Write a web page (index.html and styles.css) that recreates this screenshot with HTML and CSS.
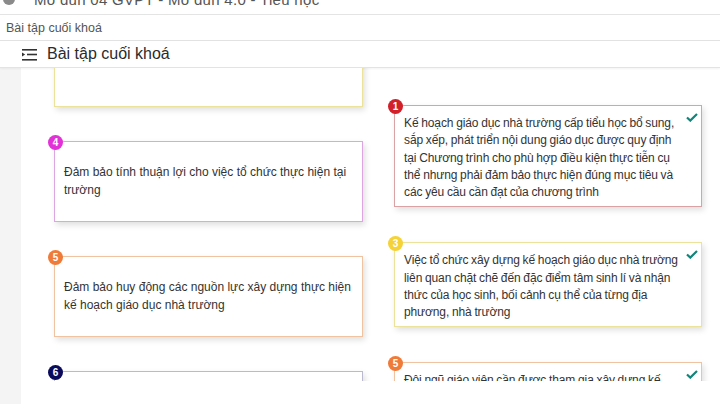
FILE: index.html
```html
<!DOCTYPE html>
<html lang="vi">
<head>
<meta charset="utf-8">
<title>Bài tập cuối khoá</title>
<link rel="stylesheet" href="styles.css">
</head>
<body>
<div class="topbar">
  <div class="topbar-inner">
    <span class="top-icon"></span>
    <span class="top-text">Mô đun 04 GVPT - Mô đun 4.0 - Tiểu học</span>
  </div>
</div>
<div class="crumb">Bài tập cuối khoá</div>
<div class="titlebar">
  <svg class="list-icon" width="16" height="12" viewBox="0 0 16 12">
    <rect x="0" y="0" width="15" height="1.6" fill="#333"/>
    <polygon points="0,3.6 3.2,5.5 0,7.4" fill="#333"/>
    <rect x="5" y="4.7" width="10" height="1.6" fill="#333"/>
    <rect x="0" y="10" width="15" height="1.6" fill="#333"/>
  </svg>
  <span class="title">Bài tập cuối khoá</span>
</div>
<div class="main">
  <div class="gutter"></div>
  <div class="panel">
    <div class="scroll">
      <div class="columns">
        <div class="col col-left">
          <div class="card card-short c-yellow"></div>
          <div class="card card-short c-magenta">
            <span class="badge b-magenta">4</span>
            <p>Đảm bảo tính thuận lợi cho việc tổ chức thực hiện tại trường</p>
          </div>
          <div class="card card-short c-orange">
            <span class="badge b-orange">5</span>
            <p>Đảm bảo huy động các nguồn lực xây dựng thực hiện kế hoạch giáo dục nhà trường</p>
          </div>
          <div class="card card-short c-navy">
            <span class="badge b-navy">6</span>
            <p></p>
          </div>
        </div>
        <div class="col col-right">
          <div class="card card-long c-red">
            <span class="badge b-red">1</span>
            <span class="check"><svg width="12" height="9" viewBox="0 0 12 9"><path d="M1 4.5 L4.3 7.6 L11 1" fill="none" stroke="#12857a" stroke-width="2.2"/></svg></span>
            <p>Kế hoạch giáo dục nhà trường cấp tiểu học bổ sung, sắp xếp, phát triển nội dung giáo dục được quy định tại Chương trình cho phù hợp điều kiện thực tiễn cụ thể nhưng phải đảm bảo thực hiện đúng mục tiêu và các yêu cầu cần đạt của chương trình</p>
          </div>
          <div class="card card-long c-yellow">
            <span class="badge b-yellow">3</span>
            <span class="check"><svg width="12" height="9" viewBox="0 0 12 9"><path d="M1 4.5 L4.3 7.6 L11 1" fill="none" stroke="#12857a" stroke-width="2.2"/></svg></span>
            <p>Việc tổ chức xây dựng kế hoạch giáo dục nhà trường liên quan chặt chẽ đến đặc điểm tâm sinh lí và nhận thức của học sinh, bối cảnh cụ thể của từng địa phương, nhà trường</p>
          </div>
          <div class="card card-long c-orange">
            <span class="badge b-orange">5</span>
            <span class="check"><svg width="12" height="9" viewBox="0 0 12 9"><path d="M1 4.5 L4.3 7.6 L11 1" fill="none" stroke="#12857a" stroke-width="2.2"/></svg></span>
            <p>Đội ngũ giáo viên cần được tham gia xây dựng kế hoạch giáo dục nhà trường</p>
          </div>
        </div>
      </div>
    </div>
  </div>
</div>
</body>
</html>
```
FILE: styles.css
```css
* { box-sizing: border-box; }
html, body { margin: 0; padding: 0; }
body {
  width: 720px;
  height: 404px;
  overflow: hidden;
  background: #ffffff;
  font-family: "Liberation Sans", Arial, sans-serif;
  color: #333;
}
.topbar {
  height: 15px;
  overflow: hidden;
  border-bottom: 1px solid #e4e4e4;
}
.topbar-inner {
  display: flex;
  align-items: center;
  gap: 19px;
  margin-top: -11px;
  padding-left: 3px;
  height: 20px;
}
.top-icon {
  width: 12px;
  height: 12px;
  border-radius: 50%;
  background: #8a8a8a;
  flex: none;
}
.top-text {
  font-size: 15px;
  color: #555;
  letter-spacing: 0.3px;
}
.crumb {
  height: 26px;
  display: flex;
  align-items: center;
  padding-left: 6px;
  font-size: 12.5px;
  color: #555;
  border-bottom: 1px solid #e2e2e2;
}
.titlebar {
  height: 27px;
  display: flex;
  align-items: center;
  padding-left: 22px;
  gap: 9px;
  border-bottom: 1px solid #e3e3e3;
  box-shadow: 0 1px 2px rgba(0,0,0,0.05);
  position: relative;
}
.list-icon { flex: none; margin-top: 1px; }
.title {
  font-size: 16px;
  color: #2b2b2b;
}
.main {
  display: flex;
  height: 336px;
}
.gutter {
  width: 21px;
  flex: none;
  background: #f4f4f4;
}
.panel {
  flex: 1;
  background: #fff;
}
.scroll {
  height: 313px;
  overflow: hidden;
}
.columns {
  display: grid;
  grid-template-columns: 309px 308px;
  column-gap: 31px;
  padding-left: 33px;
}
.col {
  display: flex;
  flex-direction: column;
}
.col-left { gap: 34px; margin-top: -42px; }
.col-right { gap: 35px; padding-top: 37px; }
.card {
  position: relative;
  background: #fff;
  border: 1px solid #ccc;
  box-shadow: 2px 3px 6px rgba(0,0,0,0.13);
}
.card p {
  margin: 0;
  font-size: 12px;
  line-height: 17.25px;
  color: #333;
}
.card-short {
  min-height: 81px;
  display: flex;
  align-items: center;
  padding: 7px 10px 7px 9px;
}
.card-long {
  padding: 9px 18px 5px 9px;
}
.card-long p {
  letter-spacing: -0.12px;
  word-spacing: -0.4px;
}
.badge {
  position: absolute;
  left: -7px;
  top: -7px;
  width: 15px;
  height: 15px;
  border-radius: 50%;
  color: #fff;
  font-size: 10px;
  font-weight: bold;
  display: flex;
  align-items: center;
  justify-content: center;
  line-height: 1;
}
.check {
  position: absolute;
  right: 3px;
  top: 7px;
  display: flex;
}
.c-yellow { border-color: #ece29c; }
.c-magenta { border-color: #dca6e2; }
.c-orange { border-color: #efc2a2; }
.c-navy { border-color: #b9b9cf; }
.c-red { border-color: #dba2a6; }
.b-magenta { background: #e231d7; }
.b-orange { background: #f07a38; }
.b-navy { background: #0b0b5c; }
.b-red { background: #d1202a; }
.b-yellow { background: #f5d235; }
```
